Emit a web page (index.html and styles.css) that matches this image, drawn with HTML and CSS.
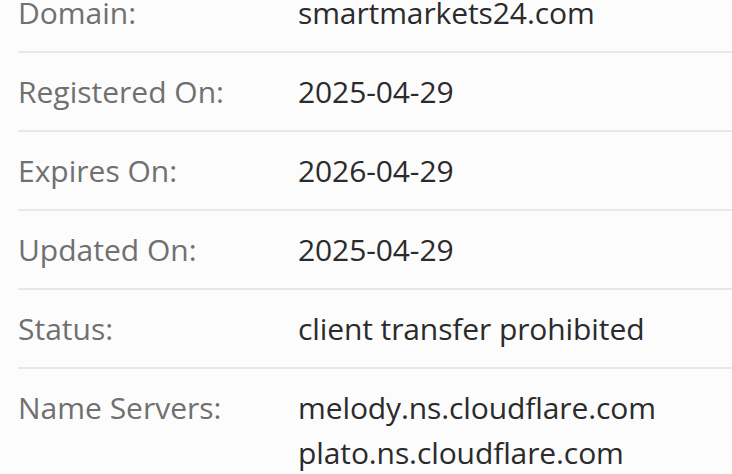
FILE: index.html
```html
<!DOCTYPE html>
<html lang="en">
<head>
<meta charset="utf-8">
<title>Whois</title>
<link rel="stylesheet" href="styles.css">
</head>
<body>
<div class="whois">
  <div class="row">
    <div class="label">Domain:</div>
    <div class="value">smartmarkets24.com</div>
  </div>
  <div class="row">
    <div class="label">Registered On:</div>
    <div class="value">2025-04-29</div>
  </div>
  <div class="row">
    <div class="label">Expires On:</div>
    <div class="value">2026-04-29</div>
  </div>
  <div class="row">
    <div class="label">Updated On:</div>
    <div class="value">2025-04-29</div>
  </div>
  <div class="row">
    <div class="label">Status:</div>
    <div class="value">client transfer prohibited</div>
  </div>
  <div class="row">
    <div class="label">Name Servers:</div>
    <div class="value">melody.ns.cloudflare.com<br>plato.ns.cloudflare.com</div>
  </div>
</div>
</body>
</html>
```
FILE: styles.css
```css
html, body {
  margin: 0;
  padding: 0;
  background: #fcfcfc;
  overflow: hidden;
}
body {
  font-family: "Open Sans", "Noto Sans", sans-serif;
  font-size: 30px;
  line-height: 45px;
}
.whois {
  margin: -26px 0 0 18px;
}
.row {
  display: grid;
  grid-template-columns: 280px 1fr;
  padding: 16px 0;
  border-bottom: 2px solid #e8e8e8;
}
.label {
  color: #707070;
}
.value {
  color: #2b2b2b;
  letter-spacing: -0.1px;
}
```
